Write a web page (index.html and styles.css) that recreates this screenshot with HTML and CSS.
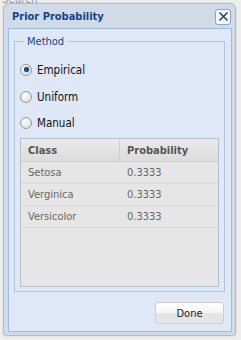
FILE: index.html
```html
<!DOCTYPE html>
<html>
<head>
<meta charset="utf-8">
<link rel="stylesheet" href="styles.css">
</head>
<body>
<div class="page-label">Search</div>
<div class="window">
  <div class="win-header">
    <span class="win-title">Prior Probability</span>
    <span class="win-close"><svg width="11" height="11" viewBox="0 0 11 11"><path d="M1.5 1.5 L9.5 9.5 M9.5 1.5 L1.5 9.5" stroke="#1f3f74" stroke-width="1.5" fill="none"/></svg></span>
  </div>
  <div class="win-body">
    <fieldset class="method">
      <legend>Method</legend>
      <div class="radios">
        <label class="radio"><span class="dot checked"></span>Empirical</label>
        <label class="radio"><span class="dot"></span>Uniform</label>
        <label class="radio"><span class="dot"></span>Manual</label>
      </div>
      <div class="grid">
        <div class="grid-head">
          <div class="cell c1">Class</div>
          <div class="cell c2">Probability</div>
        </div>
        <div class="grid-row"><div class="cell c1">Setosa</div><div class="cell c2">0.3333</div></div>
        <div class="grid-row"><div class="cell c1">Verginica</div><div class="cell c2">0.3333</div></div>
        <div class="grid-row"><div class="cell c1">Versicolor</div><div class="cell c2">0.3333</div></div>
      </div>
    </fieldset>
    <div class="footer"><button class="btn">Done</button></div>
  </div>
</div>
</body>
</html>
```
FILE: styles.css
```css
html, body {
  margin: 0;
  padding: 0;
}
body {
  width: 241px;
  height: 340px;
  background: #eeeeee;
  position: relative;
  overflow: hidden;
  font-family: "DejaVu Sans Condensed", "DejaVu Sans", sans-serif;
}
.page-label {
  position: absolute;
  left: 2px;
  top: -8px;
  font-size: 11.5px;
  line-height: 14px;
  color: #9a9a9a;
}
.window {
  position: absolute;
  left: 3px;
  top: 3px;
  width: 233px;
  height: 333px;
  border: 1px solid #aebdd0;
  border-radius: 6px 6px 3px 3px;
  background: #d1dbe7;
  box-shadow: 0 0 2px rgba(0,0,0,0.15);
  display: flex;
  flex-direction: column;
  padding: 0 3px 3px 4px;
  box-sizing: border-box;
}
.win-header {
  height: 27px;
  display: flex;
  align-items: center;
  justify-content: space-between;
  padding: 1px 0 0 4px;
  box-sizing: border-box;
}
.win-title {
  font-weight: bold;
  font-size: 11px;
  color: #15428b;
}
.win-close {
  width: 14px;
  height: 14px;
  border: 1px solid #8ea6c4;
  border-radius: 3px;
  background: #f4f7fb;
  display: flex;
  align-items: center;
  justify-content: center;
  margin-right: 1px;
}
.win-body {
  flex: 1;
  border: 1px solid #9fbbe2;
  background: #dfe8f6;
  padding: 6px 6px 7px 5px;
  display: flex;
  flex-direction: column;
}
.method {
  margin: 0;
  border: 1px solid #b2c4dc;
  padding: 4px 5px 5px 5px;
  height: 257px;
  box-sizing: border-box;
}
.method legend {
  font-size: 11px;
  color: #15428b;
  padding: 0 3px;
  margin-left: 4px;
}
.radios {
  padding-top: 4px;
  display: flex;
  flex-direction: column;
}
.radio {
  display: flex;
  align-items: center;
  height: 27px;
  font-size: 11.5px;
  color: #111;
}
.radio:last-child { height: 26px; }
.dot {
  width: 10px;
  height: 10px;
  border-radius: 50%;
  border: 1px solid #9a9a9a;
  background: radial-gradient(circle at 40% 35%, #ffffff 0%, #e3e3e3 70%, #cccccc 100%);
  margin: 0 5px 0 0;
  position: relative;
}
.dot.checked::after {
  content: "";
  position: absolute;
  left: 2.5px;
  top: 2.5px;
  width: 5px;
  height: 5px;
  border-radius: 50%;
  background: #1d4f8a;
  box-shadow: 0 0 1px #2e6db4;
}
.grid {
  margin-top: 2px;
  height: 149px;
  box-sizing: border-box;
  border: 1px solid #b4c0cc;
  background: #e6e6e6;
  font-size: 11px;
}
.grid-head {
  display: flex;
  height: 23px;
  background: linear-gradient(#eaeaea, #dcdcdc);
  border-bottom: 1px solid #cfcfcf;
  color: #555;
  font-weight: bold;
  box-sizing: border-box;
}
.grid-head .c1 {
  border-right: 1px solid #cfcfcf;
}
.grid-row {
  display: flex;
  height: 22px;
  border-bottom: 1px solid #d8d8d8;
  color: #666;
  box-sizing: border-box;
}
.cell {
  display: flex;
  align-items: center;
  padding-left: 7px;
  box-sizing: border-box;
}
.c1 { width: 99px; }
.c2 { flex: 1; }
.footer {
  display: flex;
  justify-content: flex-end;
  padding-top: 10px;
}
.btn {
  width: 69px;
  height: 22px;
  border: 1px solid #cdcdcd;
  border-radius: 3px;
  background: linear-gradient(#ffffff 0%, #f5f5f5 50%, #e4e4e4 51%, #e6e6e6 100%);
  font-family: "DejaVu Sans Condensed", "DejaVu Sans", sans-serif;
  font-size: 11px;
  color: #222;
  padding: 0;
  margin-right: 1px;
}
```
